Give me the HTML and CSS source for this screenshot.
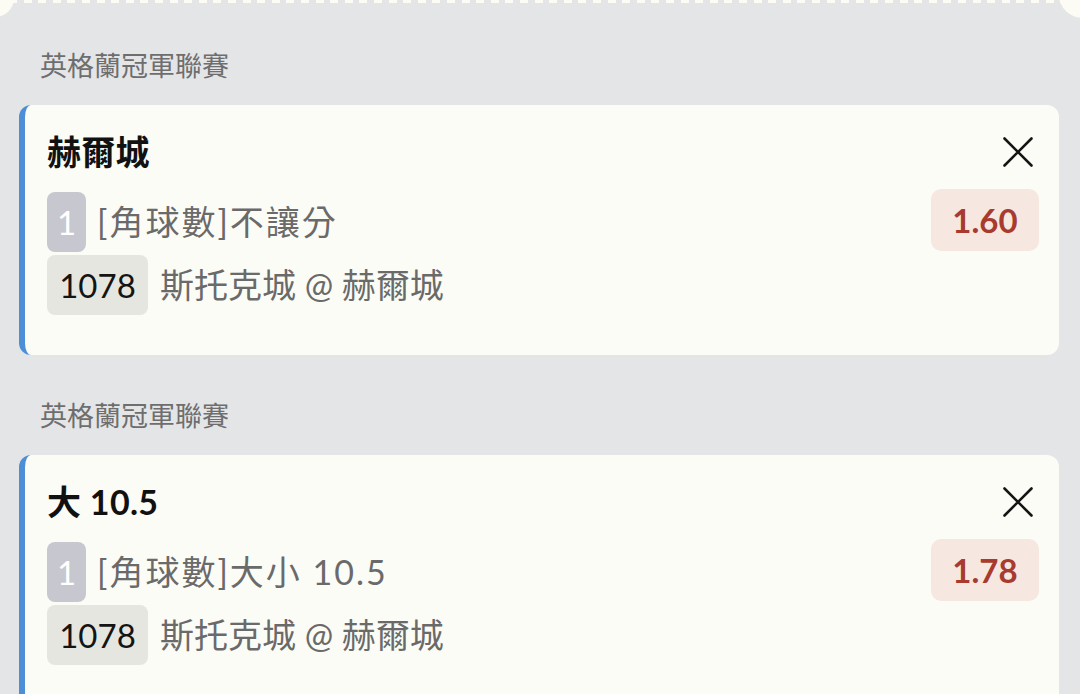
FILE: index.html
```html
<!DOCTYPE html>
<html lang="zh-Hant">
<head>
<meta charset="utf-8">
<title>投注單</title>
<link rel="stylesheet" href="styles.css">
</head>
<body>
<div class="page">
  <div class="ticket-edge">
    <span class="blob blob-left"></span>
    <span class="dashes"></span>
    <span class="blob blob-right"></span>
  </div>
  <div class="list">
    <section class="group">
      <div class="league">英格蘭冠軍聯賽</div>
      <div class="card">
        <div class="title">赫爾城</div>
        <svg class="close" viewBox="0 0 30 30" width="30" height="30"><path d="M1.5 1.5 L28.5 28.5 M28.5 1.5 L1.5 28.5" stroke="#151515" stroke-width="2.6" stroke-linecap="round" fill="none"/></svg>
        <div class="line line-market"><span class="badge badge-num">1</span><span class="text text-market">[角球數]不讓分</span></div>
        <div class="odds">1.60</div>
        <div class="line line-match"><span class="badge badge-code">1078</span><span class="text">斯托克城 @ 赫爾城</span></div>
      </div>
    </section>
    <section class="group">
      <div class="league">英格蘭冠軍聯賽</div>
      <div class="card">
        <div class="title">大 10.5</div>
        <svg class="close" viewBox="0 0 30 30" width="30" height="30"><path d="M1.5 1.5 L28.5 28.5 M28.5 1.5 L1.5 28.5" stroke="#151515" stroke-width="2.6" stroke-linecap="round" fill="none"/></svg>
        <div class="line line-market"><span class="badge badge-num">1</span><span class="text text-market">[角球數]大小 10.5</span></div>
        <div class="odds">1.78</div>
        <div class="line line-match"><span class="badge badge-code">1078</span><span class="text">斯托克城 @ 赫爾城</span></div>
      </div>
    </section>
  </div>
</div>
</body>
</html>
```
FILE: styles.css
```css
html, body {
  margin: 0;
  padding: 0;
}
body {
  background: #e4e5e7;
  font-family: Lato, "Noto Sans CJK TC", sans-serif;
  width: 1080px;
  height: 694px;
  overflow: hidden;
}
.page {
  width: 1080px;
  height: 694px;
  overflow: hidden;
}
.ticket-edge {
  position: relative;
  height: 16px;
  display: flex;
}
.dashes {
  display: block;
  margin-left: 9px;
  width: 1060px;
  height: 3px;
  background: repeating-linear-gradient(to right, #fcfbf4 0 8px, transparent 8px 14.6px);
}
.blob {
  position: absolute;
  background: #fcfbf4;
  border-radius: 50%;
}
.blob-left {
  left: -24px;
  top: -21px;
  width: 38px;
  height: 38px;
}
.blob-right {
  left: 1059px;
  top: -28px;
  width: 48px;
  height: 46px;
}
.list {
  padding: 32px 21px 0 19px;
  display: flex;
  flex-direction: column;
}
.group + .group {
  margin-top: 43px;
}
.league {
  font-size: 27px;
  line-height: 36px;
  color: #6e6e6e;
  padding-left: 21px;
  margin-bottom: 21px;
}
.card {
  background: #fcfcf6;
  border-left: 6px solid #4d8fd6;
  border-radius: 12px;
  padding: 27px 20px 40px 22px;
  display: grid;
  grid-template-columns: 1fr auto;
  align-items: center;
}
.title {
  font-size: 34px;
  font-weight: 700;
  line-height: 40px;
  color: #111;
  letter-spacing: 0.3px;
}
.close {
  justify-self: end;
  margin-right: 6px;
  display: block;
}
.line {
  display: flex;
  align-items: center;
}
.line-market {
  margin-top: 20px;
  gap: 11px;
}
.line-match {
  margin-top: 3px;
  gap: 12px;
}
.badge {
  height: 60px;
  border-radius: 8px;
  display: flex;
  align-items: center;
  justify-content: center;
  font-size: 33px;
  line-height: 1;
}
.badge-num {
  width: 39px;
  background: #c6c7cf;
  color: #fff;
}
.badge-code {
  width: 101px;
  background: #e6e6e0;
  color: #141414;
}
.text {
  font-size: 34px;
  line-height: 1;
  color: #6a6a6a;
}
.text-market {
  letter-spacing: 2px;
}
.odds {
  justify-self: end;
  align-self: start;
  margin-top: 17px;
  width: 108px;
  height: 62px;
  border-radius: 10px;
  background: #f6e7e1;
  color: #a63b2e;
  font-size: 33px;
  font-weight: 700;
  display: flex;
  align-items: center;
  justify-content: center;
}
```
